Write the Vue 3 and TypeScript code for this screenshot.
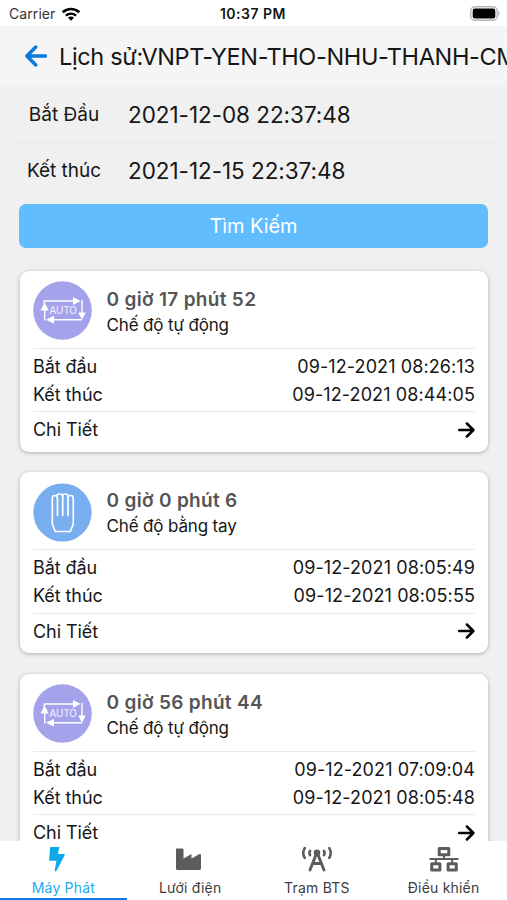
<script setup lang="ts">
type Mode = 'auto' | 'manual'

interface Session {
  mode: Mode
  duration: string
  label: string
  start: string
  end: string
}

const filters = [
  { key: 'start', label: 'Bắt Đầu', value: '2021-12-08 22:37:48' },
  { key: 'end', label: 'Kết thúc', value: '2021-12-15 22:37:48' },
]

const sessions: Session[] = [
  { mode: 'auto', duration: '0 giờ 17 phút 52', label: 'Chế độ tự động', start: '09-12-2021 08:26:13', end: '09-12-2021 08:44:05' },
  { mode: 'manual', duration: '0 giờ 0 phút 6', label: 'Chế độ bằng tay', start: '09-12-2021 08:05:49', end: '09-12-2021 08:05:55' },
  { mode: 'auto', duration: '0 giờ 56 phút 44', label: 'Chế độ tự động', start: '09-12-2021 07:09:04', end: '09-12-2021 08:05:48' },
]

const tabs = [
  { key: 'generator', label: 'Máy Phát', active: true },
  { key: 'grid', label: 'Lưới điện', active: false },
  { key: 'station', label: 'Trạm BTS', active: false },
  { key: 'control', label: 'Điều khiển', active: false },
]
</script>

<template>
  <div class="screen">
    <div class="status">
      <div class="carrier">
        <span>Carrier</span>
        <svg width="20" height="14" viewBox="0 0 20 14">
          <path d="M1.700 5.300C6.400 0.900 13.600 0.900 18.300 5.300" fill="none" stroke="#000" stroke-width="2.600" />
          <path d="M4.900 8.600C7.800 5.900 12.200 5.900 15.100 8.600" fill="none" stroke="#000" stroke-width="2.400" />
          <path d="M7 10.700C8.800 9.200 11.200 9.200 13 10.700L10 13.700Z" />
        </svg>
      </div>
      <span class="clock">10:37 PM</span>
      <svg class="battery" width="31" height="15" viewBox="0 0 31 15">
        <rect x="0.800" y="0.800" width="26.400" height="13.400" rx="4" fill="#fff" stroke="#b4b4b4" stroke-width="1.400" />
        <rect x="2.700" y="2.600" width="22.600" height="9.800" rx="2.200" />
        <path d="M28.400 5c1.600.7 1.600 4.300 0 5z" fill="#b4b4b4" />
      </svg>
    </div>

    <header class="header">
      <svg class="back" width="22" height="22" viewBox="0 0 22 22">
        <path d="M20.500 11H2M10.700 2L1.900 11L10.700 20" fill="none" stroke="#0b7ad8" stroke-width="3.500" stroke-linecap="round" stroke-linejoin="round" />
      </svg>
      <h1>Lịch sử:VNPT-YEN-THO-NHU-THANH-CM</h1>
    </header>

    <section class="filters">
      <div v-for="f in filters" :key="f.key" class="filter" :class="f.key">
        <span class="filter-label">{{ f.label }}</span>
        <span class="filter-value">{{ f.value }}</span>
      </div>
      <button class="search" type="button"><span>Tìm Kiếm</span></button>
    </section>

    <main class="list">
      <article v-for="(s, i) in sessions" :key="i" class="card">
        <div class="summary">
          <svg v-if="s.mode === 'auto'" width="59" height="59" viewBox="0 0 59 59">
            <circle cx="29.500" cy="29.500" r="29.300" fill="#a4a2ea" />
            <path d="M11.200 23V20H41M49 19V33M49 38.800H21M11.700 39.500V28" fill="none" stroke="#fff" stroke-width="1.400" />
            <path d="M40 16L47.500 20L40 24ZM45.200 31.500H52.800L49 38.800ZM21 34.800V42.800L13 38.800ZM7.500 29.500H15.700L11.600 21.500Z" fill="#fff" />
            <text x="30" y="33" class="auto-text">AUTO</text>
          </svg>
          <svg v-else width="59" height="59" viewBox="0 0 59 59">
            <circle cx="29.500" cy="29.500" r="29.100" fill="#78adef" />
            <g fill="none" stroke="#fff" stroke-width="1.700" stroke-linejoin="round" stroke-linecap="round">
              <path d="M19.300 41V15.500Q19.300 12.500 21.500 12.500Q24 12.500 24 14.500V13Q24 11 26.700 11Q29.500 11 29.500 13Q29.500 11 32.200 11Q35 11 35 13V14.500Q35 12.500 37.700 12.500Q40.300 12.500 40.300 15.500V41L37.300 48.500H22.300Z" />
              <path d="M24.500 14.500V32.500M29.700 12.500V32.500M35 14.500V32.500" />
            </g>
          </svg>
          <div class="titles">
            <strong>{{ s.duration }}</strong>
            <span>{{ s.label }}</span>
          </div>
        </div>
        <div class="times">
          <div class="row"><span>Bắt đầu</span><span class="time">{{ s.start }}</span></div>
          <div class="row"><span>Kết thúc</span><span class="time">{{ s.end }}</span></div>
        </div>
        <div class="row detail">
          <span>Chi Tiết</span>
          <svg width="17" height="16" viewBox="0 0 17 16">
            <path d="M1.200 8H15M8.900 1.500L15.400 8L8.900 14.500" fill="none" stroke="#000" stroke-width="2.500" stroke-linecap="round" stroke-linejoin="round" />
          </svg>
        </div>
      </article>
    </main>

    <nav class="tabs">
      <div v-for="t in tabs" :key="t.key" class="tab" :class="[t.key, { active: t.active }]">
        <svg v-if="t.key === 'generator'" width="30" height="26" viewBox="0 0 30 26">
          <path d="M2.500 1H11.500L9.800 8H16.200Q17.300 8.300 16.700 9.300L8.400 25Q7 26 6.700 24.500L8.400 14.700H2Q1 14.500 1.200 13.400L2 1.700Z" fill="#0ba9ea" />
        </svg>
        <svg v-else-if="t.key === 'grid'" width="30" height="26" viewBox="0 0 30 26">
          <path d="M1.500 2.500H7.500Q8.500 2.500 8.500 3.500V12.500L16.500 8V12.500L24.500 8Q26 7.500 26 9V22.500Q26 24 24.500 24H2.500Q1 24 1 22.500V3.500Q1 2.500 1.500 2.500Z" fill="#5c5c5c" />
        </svg>
        <svg v-else-if="t.key === 'station'" width="32" height="26" viewBox="0 0 32 26">
          <g fill="none" stroke="#5c5c5c" stroke-linecap="round">
            <path d="M3.700 2.200Q0.800 7 3.700 11.800M28.300 2.200Q31.200 7 28.300 11.800" stroke-width="2.600" />
            <path d="M9 5Q7.800 7 9 9M23 5Q24.200 7 23 9" stroke-width="2.700" />
            <path d="M15.300 8L9 24M16.700 8L23 24M11.500 17.500H20.500" stroke-width="2.900" />
          </g>
          <circle cx="16" cy="6.800" r="3.300" fill="#5c5c5c" />
        </svg>
        <svg v-else width="30" height="26" viewBox="0 0 30 26">
          <g fill="none" stroke="#5c5c5c" stroke-width="3" stroke-linejoin="round">
            <rect x="10.200" y="2.500" width="9.600" height="6.200" />
            <rect x="2.700" y="17.700" width="8.200" height="6.400" />
            <rect x="19.100" y="17.700" width="8.200" height="6.400" />
            <path d="M0.500 13H29.500M15 9V13M6.800 13V17.500M23.200 13V17.500" stroke-width="2" />
          </g>
        </svg>
        <span>{{ t.label }}</span>
      </div>
    </nav>
  </div>
</template>

<style>
body {
  margin: 0;
  background: #f0f0f0;
}
</style>

<style scoped>
.screen {
  width: 507px;
  height: 900px;
  display: flex;
  flex-direction: column;
  overflow: hidden;
  background: #f0f0f0;
  color: #161616;
  font-family: Inter, "Liberation Sans", sans-serif;
  white-space: nowrap;
}
.status {
  flex: none;
  height: 26px;
  display: grid;
  grid-template-columns: 1fr auto 1fr;
  align-items: center;
  padding: 1px 6px 0 9px;
  box-sizing: border-box;
  background: #fff;
  font-size: 14px;
}
.carrier {
  display: flex;
  align-items: center;
  gap: 6px;
  color: #333;
  letter-spacing: 0.080px;
}
.clock {
  font-weight: 600;
  font-size: 14px;
  letter-spacing: 0.500px;
  padding-right: 2px;
  margin-left: -2px;
}
.battery {
  justify-self: end;
}
.header {
  flex: none;
  height: 59px;
  display: flex;
  align-items: center;
  gap: 12px;
  padding: 1px 0 0 25px;
  box-sizing: border-box;
  background: #f5f5f5;
}
.back {
  flex: none;
}
h1 {
  margin: 0;
  font-size: 23.500px;
  font-weight: 400;
  letter-spacing: -0.350px;
}
.filters {
  flex: none;
  padding: 1px 11px 0;
}
.filter {
  height: 56px;
  display: flex;
  align-items: center;
  box-sizing: border-box;
}
.filter.start {
  height: 57px;
  border-bottom: 1px solid #e7e7e7;
}
.filter.end {
  padding-bottom: 2px;
}
.filter-label {
  width: 106px;
  text-align: center;
  font-size: 19px;
}
.filter-value {
  margin-left: 11px;
  font-size: 22.500px;
  letter-spacing: -0.050px;
}
.search {
  display: flex;
  align-items: center;
  justify-content: center;
  width: 469px;
  height: 44px;
  margin: 5px 8px 0;
  padding: 0;
  border: 0;
  border-radius: 7px;
  background: #62bdff;
  color: #fff;
  font: 400 20px Inter, "Liberation Sans", sans-serif;
}
.search span {
  letter-spacing: -0.100px;
}
.list {
  flex: 1;
  min-height: 0;
  overflow: hidden;
  padding: 22.500px 19px 0 20px;
}
.card {
  height: 181px;
  margin-bottom: 20.600px;
  padding: 10.500px 13px 0;
  box-sizing: border-box;
  border-radius: 9px;
  background: #fff;
  box-shadow: 0 1px 4px rgba(0, 0, 0, 0.280);
}
.summary {
  height: 66.500px;
  display: flex;
  gap: 14.500px;
  border-bottom: 1px solid #e8eaec;
}
.summary svg {
  flex: none;
}
.auto-text {
  fill: #e8e7fc;
  font: 500 10px Inter, "Liberation Sans", sans-serif;
  letter-spacing: -0.200px;
  text-anchor: middle;
}
.titles {
  display: flex;
  flex-direction: column;
  padding-top: 4.500px;
}
.titles strong {
  font-size: 19px;
  line-height: 27px;
  font-weight: 600;
  letter-spacing: 0.320px;
  color: #555;
}
.titles span {
  font-size: 17px;
  line-height: 25px;
  letter-spacing: -0.150px;
}
.times {
  padding: 3.500px 0 3px;
  border-bottom: 1px solid #e8eaec;
}
.row {
  height: 28px;
  display: flex;
  align-items: center;
  justify-content: space-between;
  font-size: 18px;
  letter-spacing: -0.080px;
}
.time {
  letter-spacing: 0.100px;
}
.detail {
  height: 35.500px;
}
.tabs {
  flex: none;
  height: 59px;
  display: grid;
  grid-template-columns: repeat(4, 1fr);
  background: #fff;
}
.tab {
  display: flex;
  flex-direction: column;
  align-items: center;
  padding-top: 5px;
  font-size: 14px;
  box-sizing: border-box;
  color: #3c3c3c;
}
.tab span {
  line-height: 20px;
  margin-top: 6px;
}
.tab.grid span,
.tab.control span {
  letter-spacing: 0.200px;
}
.tab.station span {
  letter-spacing: 0.250px;
}
.tab.active {
  color: #1daaf0;
  letter-spacing: 0.200px;
  border-bottom: 3px solid #1676e8;
}
</style>
